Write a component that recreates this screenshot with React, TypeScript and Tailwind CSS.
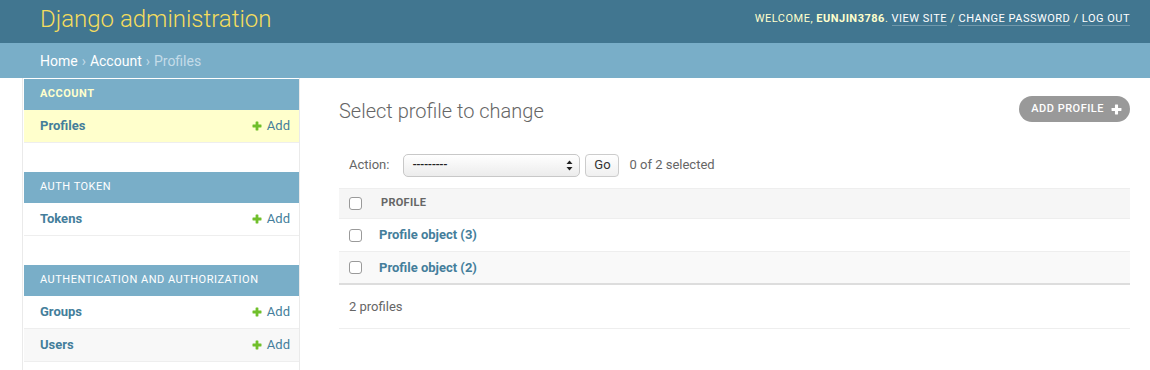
import React from "react";

const PlusIcon = ({ color = "#70bf2b", size = 10 }: { color?: string; size?: number }) => (
  <svg width={size} height={size} viewBox="0 0 10 10" className="inline-block">
    <rect x="3.6" y="0.5" width="2.8" height="9" fill={color} rx="0.4" />
    <rect x="0.5" y="3.6" width="9" height="2.8" fill={color} rx="0.4" />
  </svg>
);

const Checkbox = () => (
  <span className="inline-block w-[13px] h-[13px] rounded-[3px] border border-[#9a9a9a] bg-white" />
);

type Row = { name: string; current?: boolean; alt?: boolean };
const modules: { title: string; current?: boolean; rows: Row[] }[] = [
  { title: "Account", current: true, rows: [{ name: "Profiles", current: true }] },
  { title: "Auth Token", rows: [{ name: "Tokens" }] },
  { title: "Authentication and Authorization", rows: [{ name: "Groups" }, { name: "Users", alt: true }] },
];

export default function App() {
  return (
    <div className="w-[1150px] h-[370px] overflow-hidden bg-white text-[13px] text-[#333]" style={{ fontFamily: "Roboto, 'Liberation Sans', sans-serif" }}>
      {/* Header */}
      <div className="h-[43px] bg-[#417690] flex items-center justify-between pl-10 pr-5">
        <div className="text-[24px] font-light text-[#f5dd5d] leading-none -mt-[5px]">Django administration</div>
        <div className="text-[11px] tracking-[0.5px] text-[#ffc] uppercase -mt-[4px]">
          Welcome, <strong className="font-bold">eunjin3786</strong>.{" "}
          <span className="text-white border-b border-white/25">View site</span> /{" "}
          <span className="text-white border-b border-white/25">Change password</span> /{" "}
          <span className="text-white border-b border-white/25">Log out</span>
        </div>
      </div>
      {/* Breadcrumbs */}
      <div className="h-[35px] bg-[#79aec8] flex items-center px-10 text-[14px] text-[#c4dce8] pt-[2px]">
        <span className="text-white">Home</span>
        <span className="mx-[4px]">›</span>
        <span className="text-white">Account</span>
        <span className="mx-[4px]">›</span>
        <span>Profiles</span>
      </div>
      {/* Main */}
      <div className="flex">
        <div className="w-[23px] shrink-0 border-r border-[#eaeaea] h-[300px]" />
        <div className="w-[277px] shrink-0 border-r border-[#eaeaea] pl-px h-[300px] pt-px">
          {modules.map((m) => (
            <div key={m.title} className="mb-[29px]">
              <div
                className={`h-[31px] bg-[#79aec8] flex items-center pl-4 text-[11px] tracking-[0.5px] uppercase ${
                  m.current ? "text-[#ffc] font-bold" : "text-white"
                }`}
              >
                {m.title}
              </div>
              {m.rows.map((r) => (
                <div
                  key={r.name}
                  className={`h-[33px] border-b border-[#eee] flex items-center justify-between pl-4 pr-[9px] ${
                    r.current ? "bg-[#ffc]" : r.alt ? "bg-[#f8f8f8]" : "bg-white"
                  }`}
                >
                  <span className="font-bold text-[#447e9b]">{r.name}</span>
                  <span className="text-[#447e9b] flex items-center gap-[5px]">
                    <PlusIcon />
                    Add
                  </span>
                </div>
              ))}
            </div>
          ))}
        </div>
        <div className="flex-1 pl-[39px] pr-5 pt-5">
          <div className="flex items-center justify-between h-[24px]">
            <h1 className="text-[20px] font-light text-[#666] leading-[24px] mt-[2px]">Select profile to change</h1>
            <div className="h-[26px] rounded-full bg-[#999] text-white text-[11px] tracking-[0.5px] uppercase font-medium flex items-center pl-3 pr-[8px] gap-[7px] -mt-[2px]">
              Add profile
              <PlusIcon color="#fff" size={11} />
            </div>
          </div>
          <div className="mt-5 h-[46px] flex items-center pl-[10px] text-[#666]">
            <span>Action:</span>
            <div className="ml-[14px] w-[177px] h-[23px] rounded-[5px] border border-[#c8c8c8] bg-gradient-to-b from-white to-[#ececec] flex items-center justify-between pl-[8px] pr-[6px] text-[#222] text-[11px]">
              <span className="font-bold tracking-[-0.5px]">---------</span>
              <svg width="7" height="11" viewBox="0 0 7 11">
                <path d="M3.5 0.5 L6.5 4 L0.5 4 Z" fill="#222" />
                <path d="M3.5 10.5 L6.5 7 L0.5 7 Z" fill="#222" />
              </svg>
            </div>
            <div className="ml-[5px] w-[34px] h-[23px] rounded-[4px] border border-[#ccc] bg-gradient-to-b from-white to-[#f0f0f0] flex items-center justify-center text-[#333] text-[13px]">
              Go
            </div>
            <span className="ml-[10px]">0 of 2 selected</span>
          </div>
          {/* Table */}
          <div className="border-t border-[#eee]">
            <div className="h-[30px] bg-[#f6f6f6] border-b border-[#eee] flex items-center">
              <div className="w-[42px] pl-[10px] flex items-center">
                <Checkbox />
              </div>
              <span className="text-[11px] font-bold text-[#666] uppercase tracking-[0.3px]">Profile</span>
            </div>
            <div className="h-[33px] bg-white border-b border-[#eee] flex items-center">
              <div className="w-[40px] pl-[10px] flex items-center">
                <Checkbox />
              </div>
              <span className="font-bold text-[#447e9b]">Profile object (3)</span>
            </div>
            <div className="h-[33px] bg-[#f9f9f9] border-b-2 border-[#ddd] flex items-center">
              <div className="w-[40px] pl-[10px] flex items-center">
                <Checkbox />
              </div>
              <span className="font-bold text-[#447e9b]">Profile object (2)</span>
            </div>
          </div>
          <div className="h-[44px] border-b border-[#eee] flex items-center pl-[10px] text-[#666]">2 profiles</div>
        </div>
      </div>
    </div>
  );
}
